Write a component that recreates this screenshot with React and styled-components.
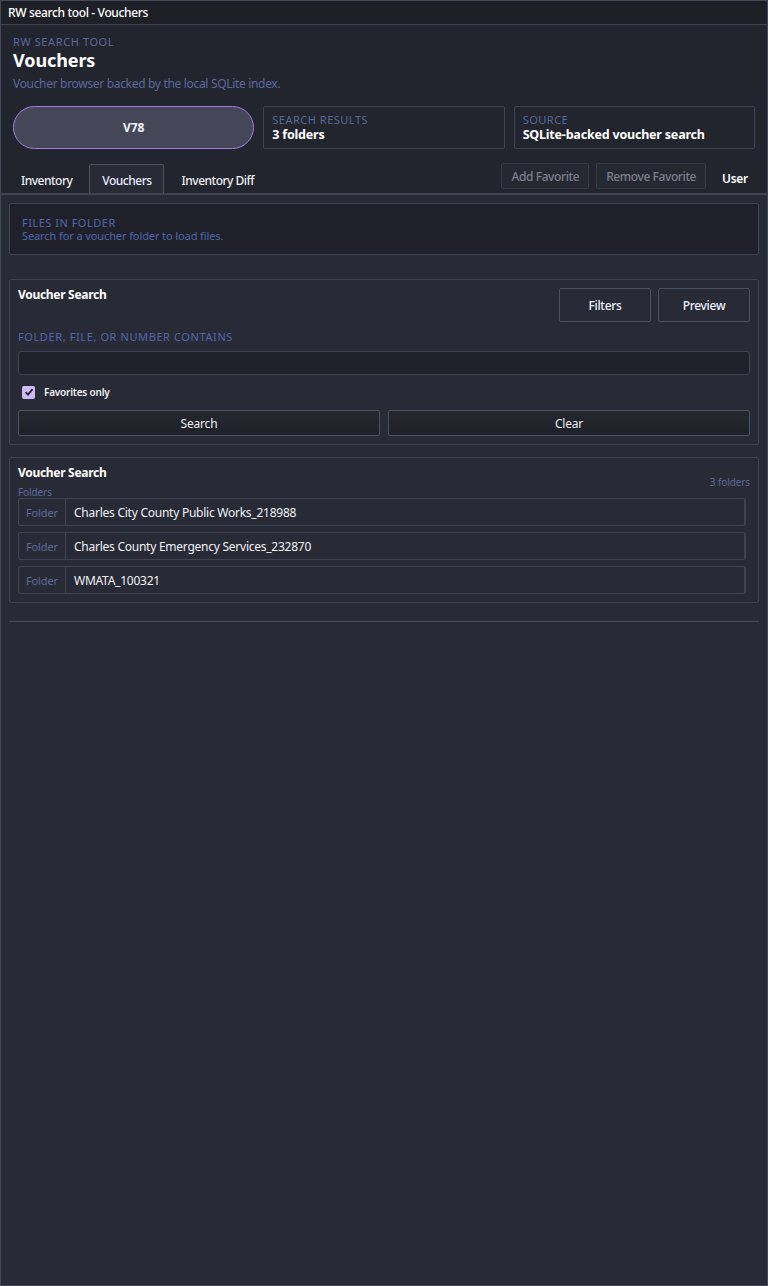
import React from "react";
import styled, { createGlobalStyle } from "styled-components";

const C = {
  winBorder: "#434958",
  titleBg: "#1e1f27",
  headerBg: "#22242e",
  bodyBg: "#282a35",
  darkPanel: "#1f2029",
  border: "#3e4453",
  btnBorder: "#4a5060",
  muted: "#5c6a9b",
  blue: "#5068ad",
  text: "#eef0f5",
};

const Global = createGlobalStyle`
  html, body { margin: 0; padding: 0; background: ${C.bodyBg}; }
  body { font-family: "Noto Sans", "Open Sans", sans-serif; color: ${C.text}; }
  * { box-sizing: border-box; }
`;

const Window = styled.div`
  width: 768px;
  height: 1286px;
  border: 1px solid ${C.winBorder};
  background: ${C.bodyBg};
  display: flex;
  flex-direction: column;
  overflow: hidden;
`;

const TitleBar = styled.div`
  height: 24px;
  flex: none;
  background: ${C.titleBg};
  border-bottom: 1px solid ${C.border};
  display: flex;
  align-items: center;
  padding-left: 7px;
  font-size: 12px;
  font-weight: 500;
  letter-spacing: -0.35px;
  color: #fff;
`;

const Header = styled.header`
  background: ${C.headerBg};
  border-bottom: 2px solid ${C.border};
  padding-top: 10px;
`;

const Intro = styled.div`
  padding: 0 12px;
`;

const Eyebrow = styled.div`
  font-size: 11px;
  line-height: 14px;
  letter-spacing: 0.6px;
  color: ${C.muted};
  text-transform: uppercase;
`;

const PageTitle = styled.h1`
  margin: 0;
  font-size: 18px;
  line-height: 22px;
  font-weight: 700;
  color: #fff;
  letter-spacing: -0.1px;
`;

const Subtitle = styled.p`
  margin: 5px 0 0;
  font-size: 12px;
  line-height: 16px;
  color: ${C.muted};
  letter-spacing: -0.32px;
`;

const Cards = styled.div`
  display: grid;
  grid-template-columns: repeat(3, 1fr);
  gap: 9px;
  padding: 0 12px;
  margin-top: 14px;
`;

const Pill = styled.div`
  height: 43px;
  border-radius: 22px;
  background: #454759;
  border: 1px solid #a47fe3;
  display: flex;
  align-items: center;
  justify-content: center;
  font-size: 12px;
  font-weight: 700;
  color: #f2f2f7;
`;

const StatCard = styled.div`
  height: 43px;
  border: 1px solid ${C.border};
  border-radius: 2px;
  padding: 5px 8px;
  display: flex;
  flex-direction: column;
  justify-content: center;
`;

const StatLabel = styled.div`
  font-size: 11px;
  line-height: 14px;
  letter-spacing: 0.5px;
  color: ${C.muted};
  text-transform: uppercase;
`;

const StatValue = styled.div`
  font-size: 12.5px;
  line-height: 16px;
  font-weight: 700;
  color: #fff;
  letter-spacing: -0.2px;
`;

const TabBar = styled.div`
  display: flex;
  align-items: flex-end;
  margin-top: 15px;
  padding: 0 19px 0 7px;
  height: 29px;
`;

const Tabs = styled.div`
  display: flex;
  gap: 5px;
  align-items: flex-end;
  flex: 1;
`;

const Tab = styled.div`
  height: 29px;
  padding: 2px 11px 0 12px;
  display: flex;
  align-items: center;
  font-size: 12px;
  font-weight: 500;
  letter-spacing: -0.5px;
  color: ${(p) => (p.$active ? "#e4ecff" : "#eceef3")};
  background: ${(p) => (p.$active ? C.bodyBg : "transparent")};
  border: 1px solid ${(p) => (p.$active ? C.btnBorder : "transparent")};
  border-bottom: none;
  border-radius: 2px 2px 0 0;
`;

const TabActions = styled.div`
  display: flex;
  align-items: center;
  gap: 7px;
  align-self: flex-start;
  margin-top: -1px;
`;

const GhostButton = styled.button`
  height: 26px;
  padding: 0 9px;
  background: #252731;
  border: 1px solid #363a46;
  border-radius: 2px;
  font-family: inherit;
  font-size: 12px;
  font-weight: 500;
  letter-spacing: -0.4px;
  color: #7b808c;
`;

const UserLabel = styled.span`
  margin-left: 9px;
  font-size: 12px;
  font-weight: 600;
  letter-spacing: -0.3px;
  color: #fff;
  padding-top: 4px;
`;

const Body = styled.main`
  padding: 8px 8px 0;
  display: flex;
  flex-direction: column;
`;

const InfoPanel = styled.section`
  height: 52px;
  background: ${C.darkPanel};
  border: 1px solid ${C.border};
  border-radius: 2px;
  padding: 12px 12px 0;
`;

const InfoLabel = styled.div`
  font-size: 11px;
  line-height: 13px;
  letter-spacing: 0.5px;
  color: ${C.blue};
  text-transform: uppercase;
`;

const InfoText = styled.div`
  font-size: 11px;
  line-height: 13px;
  color: ${C.blue};
  letter-spacing: -0.1px;
`;

const Group = styled.section`
  margin-top: ${(p) => p.$gap}px;
  border: 1px solid ${C.border};
  border-radius: 2px;
  padding: 8px;
  display: flex;
  flex-direction: column;
`;

const GroupHead = styled.div`
  display: flex;
  justify-content: space-between;
  align-items: flex-start;
`;

const GroupTitle = styled.h2`
  margin: 0;
  font-size: 12px;
  line-height: 14px;
  font-weight: 700;
  color: #fff;
  letter-spacing: -0.3px;
`;

const ButtonRow = styled.div`
  display: flex;
  gap: 7px;
`;

const ToolButton = styled.button`
  width: 92px;
  height: 34px;
  background: ${C.bodyBg};
  border: 1px solid ${C.btnBorder};
  border-radius: 2px;
  font-family: inherit;
  font-size: 12px;
  font-weight: 500;
  letter-spacing: -0.3px;
  color: #eef3ff;
`;

const FieldLabel = styled.label`
  margin-top: 8px;
  font-size: 11px;
  line-height: 14px;
  letter-spacing: 0.6px;
  color: ${C.blue};
  text-transform: uppercase;
`;

const TextInput = styled.input`
  margin-top: 7px;
  height: 24px;
  width: 100%;
  background: ${C.darkPanel};
  border: 1px solid ${C.border};
  border-radius: 3px;
  outline: none;
  color: #fff;
  font-family: inherit;
  font-size: 12px;
  padding: 0 6px;
`;

const CheckRow = styled.label`
  margin-top: 10px;
  padding-left: 4px;
  display: flex;
  align-items: center;
  gap: 9px;
  font-size: 10px;
  font-weight: 600;
  letter-spacing: -0.2px;
  color: #f0f0f5;
  height: 14px;
`;

const CheckBox = styled.span`
  width: 13px;
  height: 13px;
  border-radius: 2px;
  background: #cdb9f4;
  display: flex;
  align-items: center;
  justify-content: center;
`;

const ActionGrid = styled.div`
  margin-top: 11px;
  display: grid;
  grid-template-columns: 1fr 1fr;
  gap: 8px;
`;

const ActionButton = styled.button`
  height: 26px;
  background: linear-gradient(#262830, #1f2028);
  border: 1px solid ${C.btnBorder};
  border-radius: 2px;
  font-family: inherit;
  font-size: 12px;
  letter-spacing: -0.2px;
  color: #eceef3;
`;

const HeadLeft = styled.div`
  display: flex;
  flex-direction: column;
`;

const SmallMuted = styled.div`
  font-size: 10px;
  line-height: 12px;
  color: ${C.muted};
  letter-spacing: -0.1px;
  margin-top: ${(p) => p.$top || 0}px;
`;

const RowList = styled.div`
  display: flex;
  flex-direction: column;
  gap: 6px;
  margin-right: 4px;
`;

const FolderRow = styled.div`
  height: 28px;
  display: flex;
  border: 1px solid ${C.border};
  border-right-width: 2px;
  border-radius: 3px;
`;

const KindCell = styled.div`
  width: 47px;
  border-right: 1px solid ${C.border};
  display: flex;
  align-items: center;
  justify-content: center;
  font-size: 11px;
  color: ${C.muted};
  letter-spacing: -0.1px;
`;

const NameCell = styled.div`
  flex: 1;
  display: flex;
  align-items: center;
  padding-left: 8px;
  font-size: 12px;
  color: #f0f1f5;
  letter-spacing: -0.25px;
`;

const Divider = styled.hr`
  margin: 18px 0 0;
  border: none;
  border-top: 1px solid #4a5060;
  height: 0;
`;

const folders = [
  "Charles City County Public Works_218988",
  "Charles County Emergency Services_232870",
  "WMATA_100321",
];

export default function App() {
  return (
    <>
      <Global />
      <Window>
        <TitleBar>RW search tool - Vouchers</TitleBar>
        <Header>
          <Intro>
            <Eyebrow>RW Search Tool</Eyebrow>
            <PageTitle>Vouchers</PageTitle>
            <Subtitle>Voucher browser backed by the local SQLite index.</Subtitle>
          </Intro>
          <Cards>
            <Pill>V78</Pill>
            <StatCard>
              <StatLabel>Search Results</StatLabel>
              <StatValue>3 folders</StatValue>
            </StatCard>
            <StatCard>
              <StatLabel>Source</StatLabel>
              <StatValue>SQLite-backed voucher search</StatValue>
            </StatCard>
          </Cards>
          <TabBar>
            <Tabs>
              <Tab>Inventory</Tab>
              <Tab $active>Vouchers</Tab>
              <Tab>Inventory Diff</Tab>
            </Tabs>
            <TabActions>
              <GhostButton disabled>Add Favorite</GhostButton>
              <GhostButton disabled>Remove Favorite</GhostButton>
              <UserLabel>User</UserLabel>
            </TabActions>
          </TabBar>
        </Header>
        <Body>
          <InfoPanel>
            <InfoLabel>Files in Folder</InfoLabel>
            <InfoText>Search for a voucher folder to load files.</InfoText>
          </InfoPanel>

          <Group $gap={24}>
            <GroupHead>
              <GroupTitle>Voucher Search</GroupTitle>
              <ButtonRow>
                <ToolButton>Filters</ToolButton>
                <ToolButton>Preview</ToolButton>
              </ButtonRow>
            </GroupHead>
            <FieldLabel>Folder, file, or number contains</FieldLabel>
            <TextInput type="text" />
            <CheckRow>
              <CheckBox>
                <svg width="10" height="10" viewBox="0 0 10 10">
                  <path d="M1.6 5.2 L4 7.6 L8.6 2.2" fill="none" stroke="#23232c" strokeWidth="1.8" />
                </svg>
              </CheckBox>
              Favorites only
            </CheckRow>
            <ActionGrid>
              <ActionButton>Search</ActionButton>
              <ActionButton>Clear</ActionButton>
            </ActionGrid>
          </Group>

          <Group $gap={12}>
            <GroupHead>
              <HeadLeft>
                <GroupTitle>Voucher Search</GroupTitle>
                <SmallMuted $top={6}>Folders</SmallMuted>
              </HeadLeft>
              <SmallMuted $top={10}>3 folders</SmallMuted>
            </GroupHead>
            <RowList>
              {folders.map((f) => (
                <FolderRow key={f}>
                  <KindCell>Folder</KindCell>
                  <NameCell>{f}</NameCell>
                </FolderRow>
              ))}
            </RowList>
          </Group>

          <Divider />
        </Body>
      </Window>
    </>
  );
}
